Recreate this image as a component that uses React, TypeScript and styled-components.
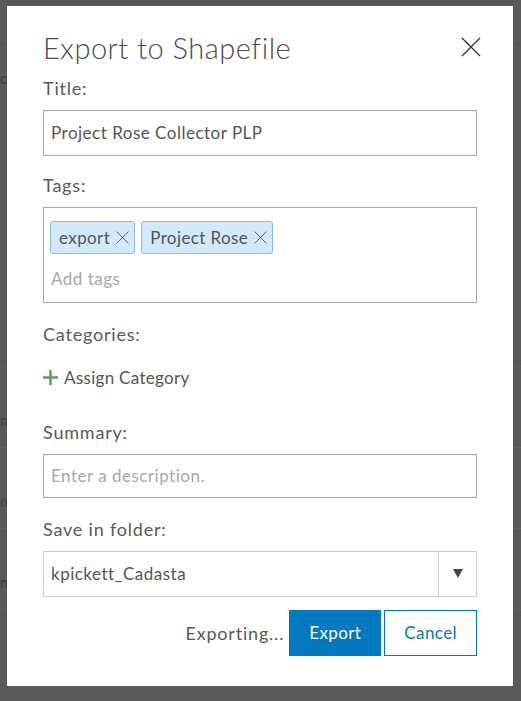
import React from "react";
import styled, { createGlobalStyle } from "styled-components";

const GlobalStyle = createGlobalStyle`
  html, body { margin: 0; padding: 0; }
  body {
    background: #595959;
    font-family: "Lato", "Noto Sans", sans-serif;
    color: #4c4c4c;
  }
  * { box-sizing: border-box; }
`;

const Screen = styled.div`
  width: 521px;
  height: 701px;
  padding: 6px 8px 15px 7px;
  background: #595959;
  position: relative;
  overflow: hidden;
`;

/* dimmed application page behind the modal overlay */
const Backdrop = styled.div`
  position: absolute;
  inset: 0;
  display: flex;
  flex-direction: column;
  font-size: 15px;
  color: #34404c;
`;

const BackdropHeader = styled.div`
  height: 44px;
  border-bottom: 1px solid #3b5774;
  flex-shrink: 0;
`;

const BackdropIntro = styled.div`
  height: 323px;
  padding-top: 25px;
  border-bottom: 1px solid #616161;
  flex-shrink: 0;
`;

const BackdropRow = styled.div`
  height: 81px;
  padding-top: 44px;
  border-bottom: 1px solid #616161;
  flex-shrink: 0;
`;

const Modal = styled.div`
  position: relative;
  width: 506px;
  height: 680px;
  background: #ffffff;
  padding: 25px 36px 30px 36px;
  display: flex;
  flex-direction: column;
`;

const Header = styled.div`
  display: flex;
  justify-content: space-between;
  align-items: flex-start;
  margin-bottom: 12px;
`;

const Title = styled.h2`
  margin: 0;
  font-size: 29px;
  font-weight: 300;
  letter-spacing: 0.5px;
  line-height: 1.2;
  color: #4c4c4c;
`;

const CloseButton = styled.button`
  border: 0;
  background: transparent;
  padding: 0;
  margin: 6px -4px 0 0;
  width: 20px;
  height: 20px;
  cursor: pointer;
  display: flex;
`;

const Field = styled.div<{ $gap?: number }>`
  display: flex;
  flex-direction: column;
  margin-bottom: ${(p) => p.$gap ?? 19}px;
`;

const Label = styled.label`
  font-size: 18px;
  letter-spacing: 0.8px;
  line-height: 20px;
  color: #595959;
  margin-bottom: 12px;
`;

const TextInput = styled.input<{ $h?: number }>`
  height: ${(p) => p.$h ?? 46}px;
  width: 100%;
  border: 1px solid #a9a9a9;
  padding: 0 7px;
  font-family: inherit;
  font-size: 17px;
  letter-spacing: 0.5px;
  color: #555555;
  background: #fff;
  outline: none;
  &::placeholder { color: #a8a8a8; }
`;

const TagBox = styled.div`
  height: 96px;
  border: 1px solid #a9a9a9;
  padding: 13px 6px 0 6px;
  display: flex;
  flex-direction: column;
  gap: 14px;
`;

const ChipRow = styled.div`
  display: flex;
  gap: 6px;
`;

const Chip = styled.span`
  height: 33px;
  display: inline-flex;
  align-items: center;
  gap: 6px;
  padding: 0 5px 0 8px;
  background: #d2e9f9;
  border: 1px solid #87bde2;
  border-radius: 3px;
  font-size: 17px;
  letter-spacing: 0.4px;
  color: #555555;
`;

const TagPlaceholder = styled.input`
  border: 0;
  padding: 0 0 0 1px;
  font-family: inherit;
  font-size: 17px;
  letter-spacing: 0.5px;
  outline: none;
  color: #555555;
  &::placeholder { color: #a8a8a8; }
`;

const AssignLink = styled.button`
  border: 0;
  background: transparent;
  padding: 0;
  margin: 11px 0 34px 0;
  display: flex;
  align-items: center;
  gap: 6px;
  font-family: inherit;
  font-size: 17px;
  letter-spacing: 0.3px;
  color: #555555;
  cursor: pointer;
  align-self: flex-start;
`;

const Select = styled.div`
  height: 46px;
  border: 1px solid #cccccc;
  display: flex;
  align-items: stretch;
`;

const SelectValue = styled.div`
  flex: 1;
  display: flex;
  align-items: center;
  padding: 0 7px;
  font-size: 17px;
  letter-spacing: 0.5px;
  color: #555555;
`;

const SelectArrow = styled.div`
  width: 38px;
  border-left: 1px solid #cccccc;
  display: flex;
  align-items: center;
  justify-content: center;
`;

const Footer = styled.div`
  display: flex;
  justify-content: flex-end;
  align-items: center;
  gap: 3px;
`;

const Status = styled.span`
  font-size: 18px;
  letter-spacing: 0.8px;
  color: #595959;
  margin-right: 2px;
`;

const Btn = styled.button<{ $primary?: boolean }>`
  height: 46px;
  padding: 0 19px;
  font-family: inherit;
  font-size: 17px;
  letter-spacing: 0.4px;
  border: 1px solid #0079c1;
  background: ${(p) => (p.$primary ? "#0079c1" : "#ffffff")};
  color: ${(p) => (p.$primary ? "#ffffff" : "#0079c1")};
  cursor: pointer;
`;

const XIcon = ({ size, stroke = "#4c4c4c", w = 1.3 }: { size: number; stroke?: string; w?: number }) => (
  <svg width={size} height={size} viewBox="0 0 20 20" fill="none">
    <path d="M1 1 L19 19 M19 1 L1 19" stroke={stroke} strokeWidth={w} />
  </svg>
);

export default function App() {
  return (
    <>
      <GlobalStyle />
      <Screen>
        <Backdrop aria-hidden>
          <BackdropHeader />
          <BackdropIntro>o</BackdropIntro>
          <BackdropRow>m</BackdropRow>
          <BackdropRow>m</BackdropRow>
          <BackdropRow>m</BackdropRow>
        </Backdrop>
        <Modal>
          <Header>
            <Title>Export to Shapefile</Title>
            <CloseButton aria-label="Close">
              <XIcon size={20} stroke="#333" w={1.3} />
            </CloseButton>
          </Header>

          <Field $gap={19}>
            <Label>Title:</Label>
            <TextInput defaultValue="Project Rose Collector PLP" />
          </Field>

          <Field $gap={21}>
            <Label>Tags:</Label>
            <TagBox>
              <ChipRow>
                <Chip>
                  export <XIcon size={13} />
                </Chip>
                <Chip>
                  Project Rose <XIcon size={13} />
                </Chip>
              </ChipRow>
              <TagPlaceholder placeholder="Add tags" />
            </TagBox>
          </Field>

          <Field $gap={0}>
            <Label>Categories:</Label>
            <AssignLink>
              <svg width="15" height="15" viewBox="0 0 15 15">
                <path d="M7.5 0 V15 M0 7.5 H15" stroke="#5a9e5a" strokeWidth="2.4" />
              </svg>
              Assign Category
            </AssignLink>
          </Field>

          <Field $gap={21}>
            <Label>Summary:</Label>
            <TextInput $h={44} placeholder="Enter a description." />
          </Field>

          <Field $gap={13}>
            <Label>Save in folder:</Label>
            <Select>
              <SelectValue>kpickett_Cadasta</SelectValue>
              <SelectArrow>
                <svg width="10" height="9" viewBox="0 0 10 9">
                  <path d="M0 0 H10 L5 9 Z" fill="#444" />
                </svg>
              </SelectArrow>
            </Select>
          </Field>

          <Footer>
            <Status>Exporting...</Status>
            <Btn $primary>Export</Btn>
            <Btn>Cancel</Btn>
          </Footer>
        </Modal>
      </Screen>
    </>
  );
}
